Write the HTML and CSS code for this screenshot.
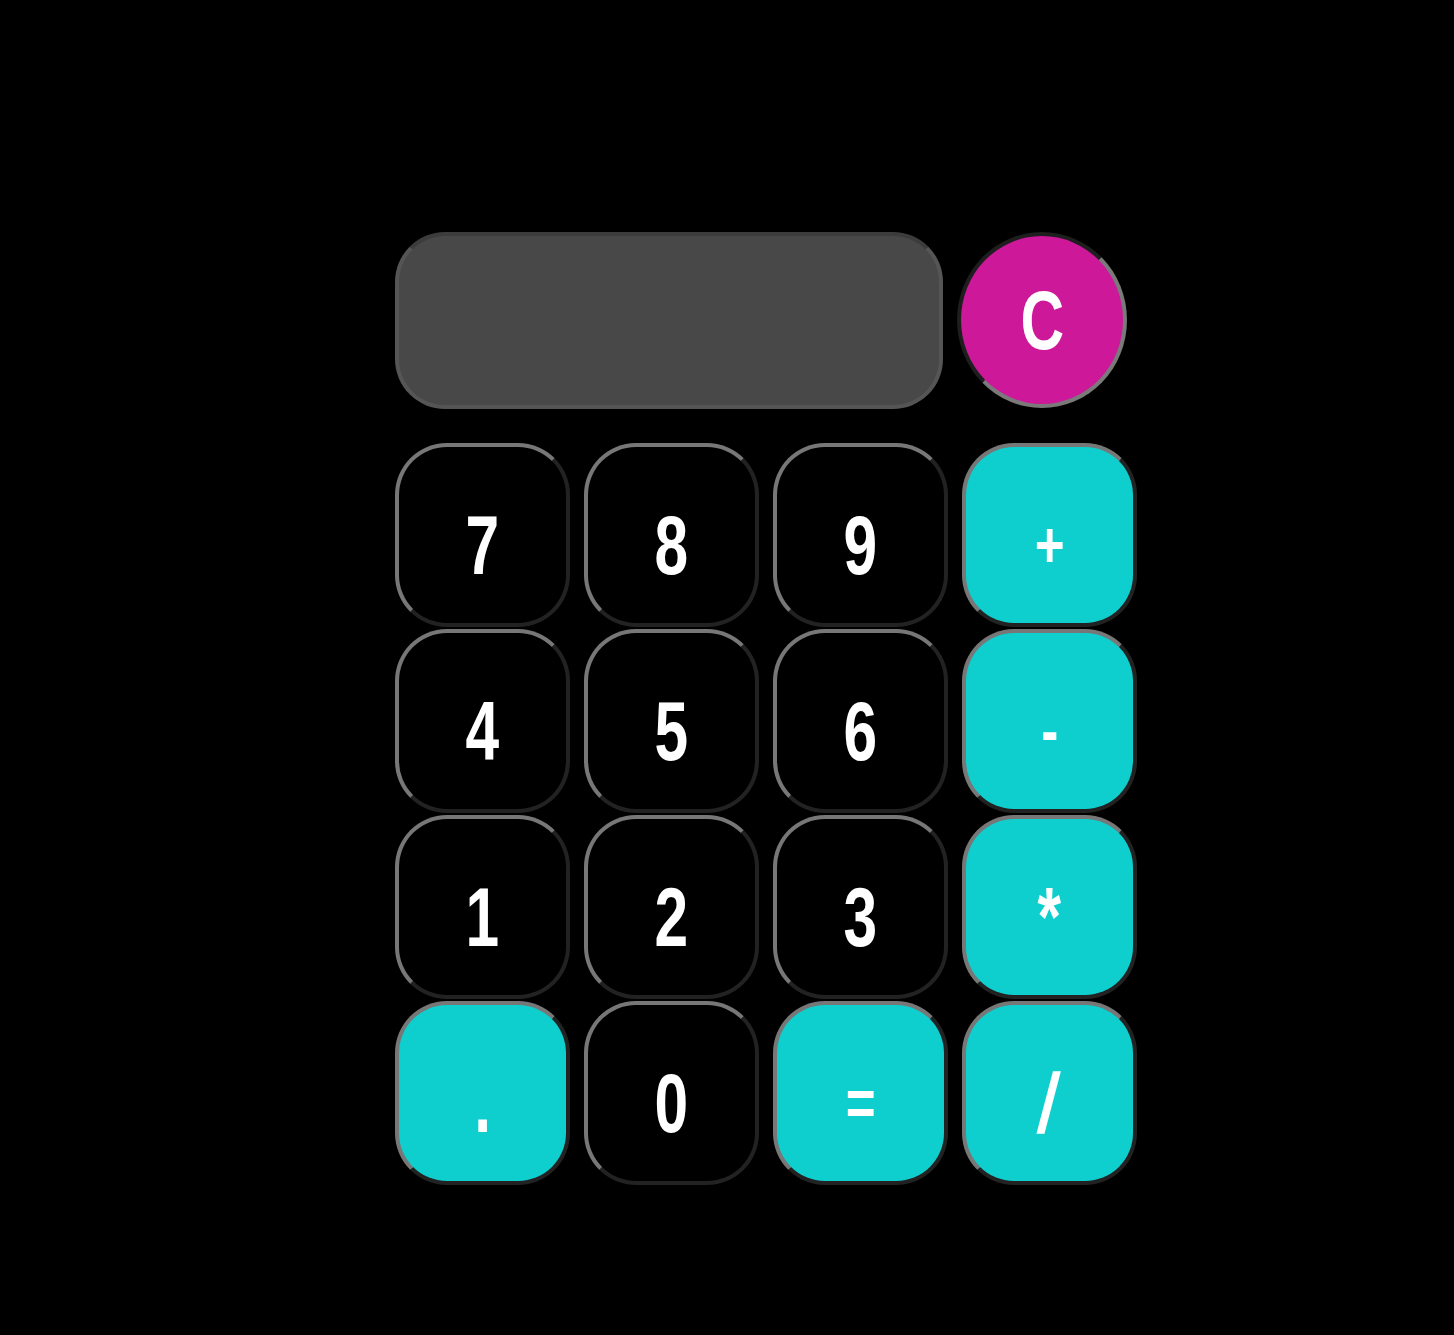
FILE: index.html
```html
<!DOCTYPE html>
<html>
<head>
<meta charset="utf-8">
<link rel="stylesheet" href="styles.css">
</head>
<body>
<div class="calc">
  <div class="top">
    <div class="display"></div>
    <button class="btn clear"><span>C</span></button>
  </div>
  <div class="keys">
    <button class="btn key"><span>7</span></button>
    <button class="btn key"><span>8</span></button>
    <button class="btn key"><span>9</span></button>
    <button class="btn key op"><span class="sym">+</span></button>
    <button class="btn key"><span>4</span></button>
    <button class="btn key"><span>5</span></button>
    <button class="btn key"><span>6</span></button>
    <button class="btn key op"><span class="sym">-</span></button>
    <button class="btn key"><span>1</span></button>
    <button class="btn key"><span>2</span></button>
    <button class="btn key"><span>3</span></button>
    <button class="btn key op"><span>*</span></button>
    <button class="btn key op"><span>.</span></button>
    <button class="btn key"><span>0</span></button>
    <button class="btn key op"><span class="sym">=</span></button>
    <button class="btn key op"><span class="slash">/</span></button>
  </div>
</div>
</body>
</html>
```
FILE: styles.css
```css
html, body {
  margin: 0;
  padding: 0;
  background: #000;
}
body {
  height: 1335px;
}
.calc {
  padding: 232px 0 0 395px;
  display: flex;
  flex-direction: column;
  gap: 34px;
}
.top {
  display: flex;
  gap: 14px;
  align-items: flex-start;
}
.display {
  width: 548px;
  height: 177px;
  box-sizing: border-box;
  background: #484848;
  border: 4px solid #555;
  border-top-color: #3c3c3c;
  border-radius: 50px;
}
.btn {
  box-sizing: border-box;
  margin: 0;
  padding: 0;
  border: 4px solid;
  color: #fff;
  font-family: "Liberation Sans Narrow", "Liberation Sans", sans-serif;
  font-weight: bold;
  font-size: 84px;
  line-height: 1;
  display: flex;
  align-items: center;
  justify-content: center;
}
.btn span {
  display: block;
  transform: scaleX(0.72);
  padding-top: 20px;
}
.btn span.sym {
  font-size: 64px;
  transform: scaleX(0.8);
}
.btn span.slash {
  transform: scaleX(0.8) skewX(-8deg);
}
.clear {
  width: 170px;
  height: 176px;
  border-radius: 50%;
  background: #cc1899;
  border-color: #1e1e1e #7a7a7a #7a7a7a #1e1e1e;
}
.clear span {
  padding-top: 0;
  font-size: 84px;
}
.keys {
  display: grid;
  grid-template-columns: repeat(4, 175px);
  grid-auto-rows: 184px;
  column-gap: 14px;
  row-gap: 2px;
}
.key {
  width: 175px;
  height: 184px;
  border-radius: 52px;
  background: #000;
  border-color: #777 #222 #222 #777;
}
.op {
  background: #0ecfce;
}
```
